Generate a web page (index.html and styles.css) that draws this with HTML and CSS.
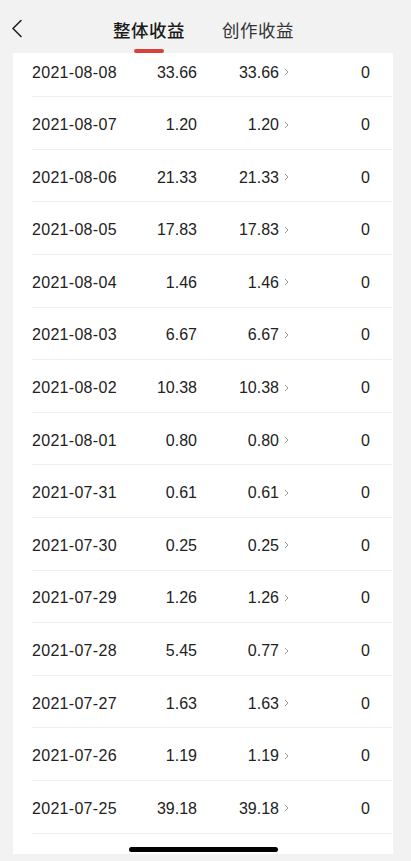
FILE: index.html
```html
<!DOCTYPE html>
<html lang="zh">
<head>
<meta charset="utf-8">
<meta name="viewport" content="width=device-width, initial-scale=1">
<title>收益</title>
<link rel="stylesheet" href="styles.css">
</head>
<body>
<div class="page">
  <header class="header">
    <button class="back" aria-label="返回">
      <svg width="12" height="19" viewBox="0 0 12 19"><polyline points="10,1.5 2,9.5 10,17.5" fill="none" stroke="#222" stroke-width="1.6" stroke-linecap="round" stroke-linejoin="round"/></svg>
    </button>
    <nav class="tabs">
      <div class="tab active">整体收益<span class="bar"></span></div>
      <div class="tab">创作收益</div>
    </nav>
  </header>
  <main class="card">
    <div class="list">
      <div class="row"><span class="date">2021-08-08</span><span class="num">33.66</span><span class="num">33.66</span><span class="chev"><svg width="5" height="8" viewBox="0 0 5 8"><polyline points="1,1 4,4 1,7" fill="none" stroke="#9a9a9a" stroke-width="1"/></svg></span><span class="num">0</span></div>
      <div class="row"><span class="date">2021-08-07</span><span class="num">1.20</span><span class="num">1.20</span><span class="chev"><svg width="5" height="8" viewBox="0 0 5 8"><polyline points="1,1 4,4 1,7" fill="none" stroke="#9a9a9a" stroke-width="1"/></svg></span><span class="num">0</span></div>
      <div class="row"><span class="date">2021-08-06</span><span class="num">21.33</span><span class="num">21.33</span><span class="chev"><svg width="5" height="8" viewBox="0 0 5 8"><polyline points="1,1 4,4 1,7" fill="none" stroke="#9a9a9a" stroke-width="1"/></svg></span><span class="num">0</span></div>
      <div class="row"><span class="date">2021-08-05</span><span class="num">17.83</span><span class="num">17.83</span><span class="chev"><svg width="5" height="8" viewBox="0 0 5 8"><polyline points="1,1 4,4 1,7" fill="none" stroke="#9a9a9a" stroke-width="1"/></svg></span><span class="num">0</span></div>
      <div class="row"><span class="date">2021-08-04</span><span class="num">1.46</span><span class="num">1.46</span><span class="chev"><svg width="5" height="8" viewBox="0 0 5 8"><polyline points="1,1 4,4 1,7" fill="none" stroke="#9a9a9a" stroke-width="1"/></svg></span><span class="num">0</span></div>
      <div class="row"><span class="date">2021-08-03</span><span class="num">6.67</span><span class="num">6.67</span><span class="chev"><svg width="5" height="8" viewBox="0 0 5 8"><polyline points="1,1 4,4 1,7" fill="none" stroke="#9a9a9a" stroke-width="1"/></svg></span><span class="num">0</span></div>
      <div class="row"><span class="date">2021-08-02</span><span class="num">10.38</span><span class="num">10.38</span><span class="chev"><svg width="5" height="8" viewBox="0 0 5 8"><polyline points="1,1 4,4 1,7" fill="none" stroke="#9a9a9a" stroke-width="1"/></svg></span><span class="num">0</span></div>
      <div class="row"><span class="date">2021-08-01</span><span class="num">0.80</span><span class="num">0.80</span><span class="chev"><svg width="5" height="8" viewBox="0 0 5 8"><polyline points="1,1 4,4 1,7" fill="none" stroke="#9a9a9a" stroke-width="1"/></svg></span><span class="num">0</span></div>
      <div class="row"><span class="date">2021-07-31</span><span class="num">0.61</span><span class="num">0.61</span><span class="chev"><svg width="5" height="8" viewBox="0 0 5 8"><polyline points="1,1 4,4 1,7" fill="none" stroke="#9a9a9a" stroke-width="1"/></svg></span><span class="num">0</span></div>
      <div class="row"><span class="date">2021-07-30</span><span class="num">0.25</span><span class="num">0.25</span><span class="chev"><svg width="5" height="8" viewBox="0 0 5 8"><polyline points="1,1 4,4 1,7" fill="none" stroke="#9a9a9a" stroke-width="1"/></svg></span><span class="num">0</span></div>
      <div class="row"><span class="date">2021-07-29</span><span class="num">1.26</span><span class="num">1.26</span><span class="chev"><svg width="5" height="8" viewBox="0 0 5 8"><polyline points="1,1 4,4 1,7" fill="none" stroke="#9a9a9a" stroke-width="1"/></svg></span><span class="num">0</span></div>
      <div class="row"><span class="date">2021-07-28</span><span class="num">5.45</span><span class="num">0.77</span><span class="chev"><svg width="5" height="8" viewBox="0 0 5 8"><polyline points="1,1 4,4 1,7" fill="none" stroke="#9a9a9a" stroke-width="1"/></svg></span><span class="num">0</span></div>
      <div class="row"><span class="date">2021-07-27</span><span class="num">1.63</span><span class="num">1.63</span><span class="chev"><svg width="5" height="8" viewBox="0 0 5 8"><polyline points="1,1 4,4 1,7" fill="none" stroke="#9a9a9a" stroke-width="1"/></svg></span><span class="num">0</span></div>
      <div class="row"><span class="date">2021-07-26</span><span class="num">1.19</span><span class="num">1.19</span><span class="chev"><svg width="5" height="8" viewBox="0 0 5 8"><polyline points="1,1 4,4 1,7" fill="none" stroke="#9a9a9a" stroke-width="1"/></svg></span><span class="num">0</span></div>
      <div class="row"><span class="date">2021-07-25</span><span class="num">39.18</span><span class="num">39.18</span><span class="chev"><svg width="5" height="8" viewBox="0 0 5 8"><polyline points="1,1 4,4 1,7" fill="none" stroke="#9a9a9a" stroke-width="1"/></svg></span><span class="num">0</span></div>
      <div class="row"><span class="date">2021-07-24</span><span class="num">3.40</span><span class="num">3.40</span><span class="chev"><svg width="5" height="8" viewBox="0 0 5 8"><polyline points="1,1 4,4 1,7" fill="none" stroke="#9a9a9a" stroke-width="1"/></svg></span><span class="num">0</span></div>
    </div>
  </main>
  <div class="home-indicator"></div>
</div>
</body>
</html>
```

FILE: styles.css
```css
* { box-sizing: border-box; }
html, body {
  margin: 0;
  padding: 0;
  background: #f2f2f2;
  font-family: "Liberation Sans", "Noto Sans CJK SC", Arial, sans-serif;
  color: #222;
}
.page {
  position: relative;
  width: 411px;
  height: 861px;
  overflow: hidden;
}
.header {
  height: 53px;
  display: flex;
  align-items: flex-start;
  padding: 0 0 0 11px;
}
.back {
  margin-top: 19px;
  width: 12px;
  height: 19px;
  padding: 0;
  border: 0;
  background: none;
  display: block;
}
.back svg { display: block; }
.tabs {
  display: flex;
  gap: 37px;
  margin-left: 90px;
  padding-top: 17px;
}
.tab {
  position: relative;
  font-family: "Noto Sans CJK SC", sans-serif;
  font-size: 17.5px;
  line-height: 26px;
  color: #333;
  letter-spacing: 0.5px;
}
.tab.active {
  color: #1a1a1a;
  font-weight: 500;
}
.tab .bar {
  position: absolute;
  left: 50%;
  top: 32px;
  width: 30px;
  height: 3.5px;
  margin-left: -15px;
  border-radius: 2px;
  background: #d9413f;
}
.card {
  margin: 0 18px 0 13px;
  height: 801px;
  background: #fff;
  overflow: hidden;
}
.list {
  margin-top: -8.3px;
}
.row {
  height: 52.6px;
  padding-top: 4px;
  margin-left: 19px;
  margin-right: 1px;
  border-bottom: 1px solid #efefef;
  display: grid;
  grid-template-columns: 110px 55px 82px 10px 81px;
  align-items: center;
  font-size: 16px;
  color: #222;
}
.date {
  letter-spacing: 0.3px;
}
.num {
  text-align: right;
}
.chev {
  display: flex;
  justify-content: flex-end;
  padding-bottom: 1px;
}
.chev svg { display: block; }
.home-indicator {
  position: absolute;
  left: 129px;
  top: 847px;
  width: 149px;
  height: 5px;
  border-radius: 3px;
  background: #000;
}
```
